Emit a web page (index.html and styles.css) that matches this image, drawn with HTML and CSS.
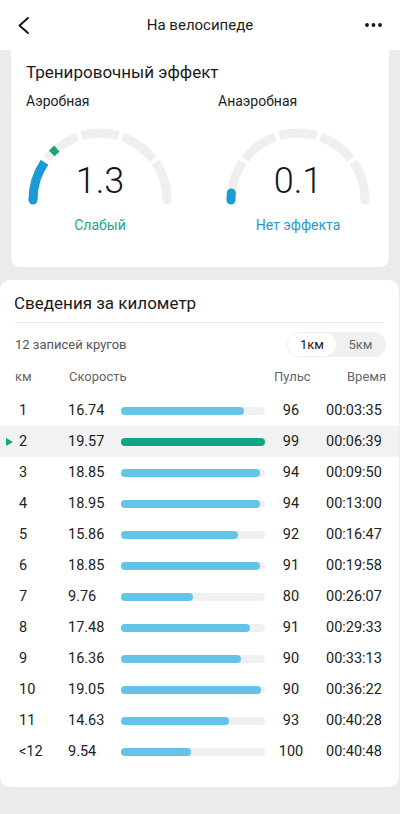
FILE: index.html
```html
<!DOCTYPE html>
<html lang="ru">
<head>
<meta charset="utf-8">
<title>На велосипеде</title>
<link rel="stylesheet" href="styles.css">
</head>
<body>
<header class="topbar">
  <svg class="icon" width="24" height="24" viewBox="0 0 24 24"><path d="M16 5 L7.5 12.5 L16 20" fill="none" stroke="#111" stroke-width="1.9" stroke-linecap="round" stroke-linejoin="round"/></svg>
  <div class="topbar-title">На велосипеде</div>
  <svg class="icon" width="24" height="24" viewBox="0 0 24 24"><circle cx="3" cy="12" r="1.9" fill="#111"/><circle cx="9.5" cy="12" r="1.9" fill="#111"/><circle cx="16" cy="12" r="1.9" fill="#111"/></svg>
</header>

<section class="card effect">
  <h2 class="card-title">Тренировочный эффект</h2>
  <div class="gauges">
    <div class="gauge-col">
      <div class="gauge-label">Аэробная</div>
      <div class="gauge gauge-left">
        <svg width="160" height="84" viewBox="0 0 160 84">
          <g fill="none" stroke="#efefef" stroke-width="9">
            <path d="M13 75 A67 67 0 0 1 24.58 37.34"/>
            <path d="M27.06 33.94 A67 67 0 0 1 57.30 11.96"/>
            <path d="M61.31 10.66 A67 67 0 0 1 98.69 10.66"/>
            <path d="M102.70 11.96 A67 67 0 0 1 132.94 33.94"/>
            <path d="M135.42 37.34 A67 67 0 0 1 147 75"/>
          </g>
          <circle cx="147" cy="75" r="4.5" fill="#efefef"/>
          <path d="M13 75 A67 67 0 0 1 24.58 37.34" fill="none" stroke="#1b9ad6" stroke-width="9"/>
          <circle cx="13" cy="75" r="4.5" fill="#1b9ad6"/>
          <path d="M31.81 28.45 A67 67 0 0 1 36.93 23.68" fill="none" stroke="#15a57f" stroke-width="8"/>
        </svg>
        <div class="gauge-value">1.3</div>
        <div class="gauge-status status-green">Слабый</div>
      </div>
    </div>
    <div class="gauge-col">
      <div class="gauge-label">Анаэробная</div>
      <div class="gauge gauge-right">
        <svg width="160" height="84" viewBox="0 0 160 84">
          <g fill="none" stroke="#efefef" stroke-width="9">
            <path d="M13 75 A67 67 0 0 1 24.58 37.34"/>
            <path d="M27.06 33.94 A67 67 0 0 1 57.30 11.96"/>
            <path d="M61.31 10.66 A67 67 0 0 1 98.69 10.66"/>
            <path d="M102.70 11.96 A67 67 0 0 1 132.94 33.94"/>
            <path d="M135.42 37.34 A67 67 0 0 1 147 75"/>
          </g>
          <circle cx="13" cy="75" r="4.5" fill="#efefef"/>
          <circle cx="147" cy="75" r="4.5" fill="#efefef"/>
          <path d="M13 75 A67 67 0 0 1 13.37 68" fill="none" stroke="#1b9ad6" stroke-width="9" stroke-linecap="round"/>
        </svg>
        <div class="gauge-value">0.1</div>
        <div class="gauge-status status-blue">Нет эффекта</div>
      </div>
    </div>
  </div>
</section>

<section class="card km">
  <h2 class="card-title">Сведения за километр</h2>
  <div class="divider"></div>
  <div class="toolbar">
    <span class="laps">12 записей кругов</span>
    <div class="toggle">
      <span class="toggle-item active">1км</span>
      <span class="toggle-item">5км</span>
    </div>
  </div>
  <div class="thead">
    <span class="th-km">км</span>
    <span class="th-speed">Скорость</span>
    <span class="th-pulse">Пульс</span>
    <span class="th-time">Время</span>
  </div>
  <div class="rows">
    <div class="row"><span class="mark"></span><span>1</span><span>16.74</span><span class="bar"><span class="fill" style="width:85.54%"></span></span><span class="pulse">96</span><span class="time">00:03:35</span></div>
    <div class="row current"><span class="mark"><i class="tri"></i></span><span>2</span><span>19.57</span><span class="bar"><span class="fill" style="width:100%"></span></span><span class="pulse">99</span><span class="time">00:06:39</span></div>
    <div class="row"><span class="mark"></span><span>3</span><span>18.85</span><span class="bar"><span class="fill" style="width:96.32%"></span></span><span class="pulse">94</span><span class="time">00:09:50</span></div>
    <div class="row"><span class="mark"></span><span>4</span><span>18.95</span><span class="bar"><span class="fill" style="width:96.83%"></span></span><span class="pulse">94</span><span class="time">00:13:00</span></div>
    <div class="row"><span class="mark"></span><span>5</span><span>15.86</span><span class="bar"><span class="fill" style="width:81.04%"></span></span><span class="pulse">92</span><span class="time">00:16:47</span></div>
    <div class="row"><span class="mark"></span><span>6</span><span>18.85</span><span class="bar"><span class="fill" style="width:96.32%"></span></span><span class="pulse">91</span><span class="time">00:19:58</span></div>
    <div class="row"><span class="mark"></span><span>7</span><span>9.76</span><span class="bar"><span class="fill" style="width:49.87%"></span></span><span class="pulse">80</span><span class="time">00:26:07</span></div>
    <div class="row"><span class="mark"></span><span>8</span><span>17.48</span><span class="bar"><span class="fill" style="width:89.32%"></span></span><span class="pulse">91</span><span class="time">00:29:33</span></div>
    <div class="row"><span class="mark"></span><span>9</span><span>16.36</span><span class="bar"><span class="fill" style="width:83.6%"></span></span><span class="pulse">90</span><span class="time">00:33:13</span></div>
    <div class="row"><span class="mark"></span><span>10</span><span>19.05</span><span class="bar"><span class="fill" style="width:97.34%"></span></span><span class="pulse">90</span><span class="time">00:36:22</span></div>
    <div class="row"><span class="mark"></span><span>11</span><span>14.63</span><span class="bar"><span class="fill" style="width:74.76%"></span></span><span class="pulse">93</span><span class="time">00:40:28</span></div>
    <div class="row"><span class="mark"></span><span>&lt;12</span><span>9.54</span><span class="bar"><span class="fill" style="width:48.75%"></span></span><span class="pulse">100</span><span class="time">00:40:48</span></div>
  </div>
</section>
</body>
</html>
```
FILE: styles.css
```css
* { box-sizing: border-box; }
html, body { margin: 0; padding: 0; }
body {
  width: 400px;
  min-height: 814px;
  background: #ebebee;
  font-family: Roboto, "Noto Sans", "Liberation Sans", sans-serif;
  color: #1c1c1c;
}
.topbar {
  height: 50px;
  background: #fff;
  display: flex;
  align-items: center;
  justify-content: space-between;
  padding: 0 12px;
}
.icon { display: block; }
.topbar-title { font-size: 15px; color: #1c1c1c; }

.card { background: #fff; }
.card-title {
  margin: 0;
  font-size: 17px;
  font-weight: 400;
  line-height: 22px;
  color: #1a1a1a;
}
.effect {
  margin: 0 11px;
  padding: 11px 15px 33px;
  border-radius: 0 0 9px 9px;
}
.gauges {
  display: grid;
  grid-template-columns: 192px 156px;
  margin-top: 9px;
}
.gauge-label { font-size: 14px; line-height: 18px; color: #222; }
.gauge {
  position: relative;
  width: 160px;
  margin-top: 15px;
}
.gauge svg { display: block; }
.gauge-left { margin-left: -6px; }
.gauge-value {
  position: absolute;
  left: 0; right: 0;
  top: 36px;
  text-align: center;
  font-size: 36px;
  font-weight: 300;
  line-height: 40px;
  color: #151515;
}
.gauge-status {
  margin-top: 7px;
  text-align: center;
  font-size: 14px;
  line-height: 18px;
}
.status-green { color: #24a487; }
.status-blue { color: #2298d0; }

.km {
  margin: 13px 1px 0 0;
  padding: 12px 0 20px;
  border-radius: 10px;
}
.km .card-title { padding-left: 14px; }
.divider {
  height: 1px;
  background: #ebebeb;
  margin: 8px 15px 0;
}
.toolbar {
  display: flex;
  align-items: center;
  justify-content: space-between;
  margin: 9px 13px 0 15px;
}
.laps { font-size: 13px; color: #555; }
.toggle {
  display: flex;
  align-items: center;
  height: 25px;
  width: 99px;
  padding: 1px;
  background: #f0f0f2;
  border-radius: 13px;
}
.toggle-item {
  flex: 1;
  height: 23px;
  line-height: 23px;
  text-align: center;
  font-size: 13px;
  color: #666;
  border-radius: 12px;
}
.toggle-item.active { background: #fff; color: #1a1a1a; flex: 0 0 48px; }

.thead {
  display: grid;
  grid-template-columns: 54px 1fr 73px 38px;
  margin: 11px 14px 0 15px;
  font-size: 13px;
  line-height: 18px;
  color: #666;
}
.th-pulse { padding-left: 0; }
.th-time { text-align: right; }

.rows { margin-top: 9px; }
.row {
  display: grid;
  grid-template-columns: 19px 49px 53px 144px 52px 1fr;
  align-items: center;
  height: 31px;
  font-size: 14.5px;
  color: #222;
}
.row.current { background: #f2f2f2; }
.mark { display: flex; align-items: center; }
.tri {
  display: block;
  margin-left: 6px;
  width: 0; height: 0;
  border-top: 4.5px solid transparent;
  border-bottom: 4.5px solid transparent;
  border-left: 7px solid #17a584;
}
.bar {
  display: block;
  height: 8px;
  background: #f0f0f0;
  border-radius: 4px;
}
.fill {
  display: block;
  height: 8px;
  background: #63c3e8;
  border-radius: 4px;
}
.current .fill { background: #12a583; }
.pulse { text-align: center; }
.time { padding-left: 9px; }
```
